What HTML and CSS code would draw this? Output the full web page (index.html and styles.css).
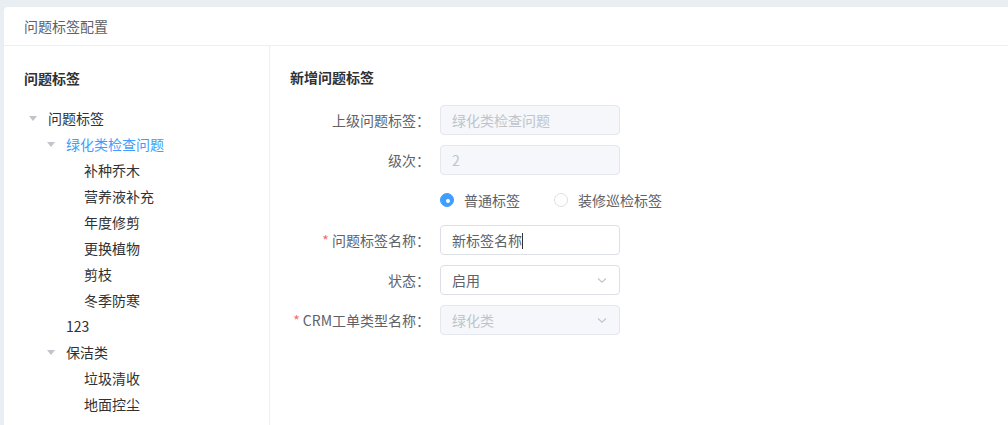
FILE: index.html
```html
<!DOCTYPE html>
<html lang="zh-CN">
<head>
  <meta charset="UTF-8" />
  <title>问题标签配置</title>
  <link rel="stylesheet" href="styles.css">
</head>
<body>
  <div class="card">
    <div class="card-header">问题标签配置</div>
    <div class="card-body">
      <div class="side">
        <div class="side-title">问题标签</div>
        <ul class="tree">
          <li class="node"><span class="caret"></span><span>问题标签</span></li>
          <li class="node lv2 active"><span class="caret"></span><span>绿化类检查问题</span></li>
          <li class="node lv3"><span class="caret none"></span><span>补种乔木</span></li>
          <li class="node lv3"><span class="caret none"></span><span>营养液补充</span></li>
          <li class="node lv3"><span class="caret none"></span><span>年度修剪</span></li>
          <li class="node lv3"><span class="caret none"></span><span>更换植物</span></li>
          <li class="node lv3"><span class="caret none"></span><span>剪枝</span></li>
          <li class="node lv3"><span class="caret none"></span><span>冬季防寒</span></li>
          <li class="node lv2"><span class="caret none"></span><span>123</span></li>
          <li class="node lv2"><span class="caret"></span><span>保洁类</span></li>
          <li class="node lv3"><span class="caret none"></span><span>垃圾清收</span></li>
          <li class="node lv3"><span class="caret none"></span><span>地面控尘</span></li>
        </ul>
      </div>
      <div class="main">
        <div class="main-title">新增问题标签</div>
        <form class="form">
          <div class="form-row">
            <label class="form-label">上级问题标签<i class="colon">：</i></label>
            <div class="input disabled">绿化类检查问题</div>
          </div>
          <div class="form-row">
            <label class="form-label">级次<i class="colon">：</i></label>
            <div class="input disabled">2</div>
          </div>
          <div class="form-row">
            <label class="form-label"></label>
            <div class="radios">
              <span class="radio checked"><i class="dot"></i>普通标签</span>
              <span class="radio"><i class="dot"></i>装修巡检标签</span>
            </div>
          </div>
          <div class="form-row">
            <label class="form-label"><em>*</em> 问题标签名称<i class="colon">：</i></label>
            <div class="input">新标签名称<span class="cursor"></span></div>
          </div>
          <div class="form-row">
            <label class="form-label">状态<i class="colon">：</i></label>
            <div class="input select">启用
              <svg class="arrow" width="12" height="12" viewBox="0 0 12 12"><path d="M2 4.5 L6 8.2 L10 4.5" fill="none" stroke="#c0c4cc" stroke-width="1.1"/></svg>
            </div>
          </div>
          <div class="form-row">
            <label class="form-label"><em>*</em> CRM工单类型名称<i class="colon">：</i></label>
            <div class="input select disabled">绿化类
              <svg class="arrow" width="12" height="12" viewBox="0 0 12 12"><path d="M2 4.5 L6 8.2 L10 4.5" fill="none" stroke="#c0c4cc" stroke-width="1.1"/></svg>
            </div>
          </div>
        </form>
      </div>
    </div>
  </div>
</body>
</html>
```

FILE: styles.css
```css
body {
  margin: 0;
  padding: 7px 0 0 4px;
  background: #e9eef3;
  font-family: "Microsoft YaHei", "Noto Sans CJK SC", "Liberation Sans", sans-serif;
  font-size: 14px;
  color: #303133;
  overflow: hidden;
  height: 418px;
}
.card {
  background: #fff;
  border-radius: 4px 0 0 0;
  height: 100%;
}
.card-header {
  height: 38px;
  line-height: 38px;
  padding-left: 20px;
  color: #606266;
  border-bottom: 1px solid #ebeef5;
}
.card-body { display: flex; height: 380px; }
.side {
  width: 245px;
  padding-left: 20px;
  border-right: 1px solid #ebeef5;
}
.side-title {
  font-weight: bold;
  margin-top: 22px;
  height: 20px;
  line-height: 20px;
}
.tree { list-style: none; margin: 17px 0 0; padding: 0; }
.node {
  height: 26px;
  line-height: 26px;
  display: flex;
  align-items: center;
  color: #303133;
}
.node.lv2 { padding-left: 18px; }
.node.lv3 { padding-left: 36px; }
.node.active { color: #409eff; }
.caret {
  width: 0;
  height: 0;
  margin: 0 11px 0 5px;
  border-left: 4px solid transparent;
  border-right: 4px solid transparent;
  border-top: 5px solid #c0c4cc;
}
.caret.none { border-top-color: transparent; }
.main { flex: 1; padding-left: 20px; }
.main-title {
  font-weight: bold;
  margin-top: 21px;
  height: 20px;
  line-height: 20px;
}
.form { margin-top: 18px; }
.form-row {
  display: flex;
  align-items: center;
  height: 30px;
  margin-bottom: 10px;
}
.form-label {
  width: 140px;
  padding-right: 10px;
  text-align: right;
  color: #606266;
  white-space: nowrap;
}
.form-label em { color: #f56c6c; font-style: normal; }
.colon { font-style: normal; display: inline-block; width: 14px; text-align: center; }
.input {
  position: relative;
  box-sizing: border-box;
  width: 180px;
  height: 30px;
  line-height: 28px;
  padding: 0 11px;
  border: 1px solid #dcdfe6;
  border-radius: 4px;
  color: #606266;
  background: #fff;
}
.input.disabled {
  background: #f5f7fa;
  border-color: #e4e7ed;
  color: #c0c4cc;
}
.cursor {
  display: inline-block;
  width: 1px;
  height: 16px;
  background: #303133;
  vertical-align: -3px;
}
.arrow { position: absolute; right: 11px; top: 8px; }
.radios { display: flex; gap: 34px; color: #606266; }
.radio { display: flex; align-items: center; }
.dot {
  box-sizing: border-box;
  width: 14px;
  height: 14px;
  border-radius: 50%;
  border: 1px solid #dcdfe6;
  margin-right: 10px;
  position: relative;
}
.radio.checked .dot { background: #409eff; border-color: #409eff; }
.radio.checked .dot::after {
  content: "";
  position: absolute;
  left: 5px; top: 5px;
  width: 4px; height: 4px;
  border-radius: 50%;
  background: #fff;
}
```
